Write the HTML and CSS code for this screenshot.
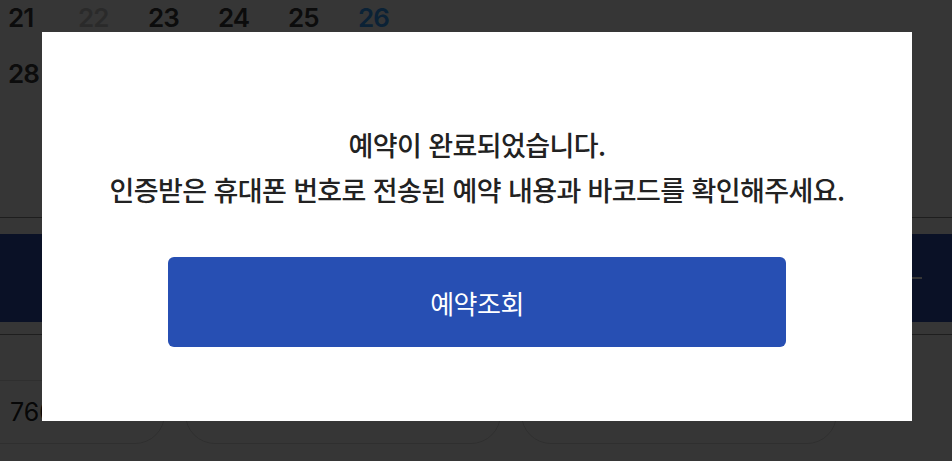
FILE: index.html
```
<!DOCTYPE html>
<html lang="ko">
<head>
  <meta charset="UTF-8">
  <meta name="viewport" content="width=device-width, initial-scale=1.0">
  <title>예약 완료</title>
  <link rel="stylesheet" href="styles.css">
</head>
<body>

  <div class="page">
    <div class="calendar">
      <div class="week">
        <span class="day">21</span>
        <span class="day off">22</span>
        <span class="day">23</span>
        <span class="day">24</span>
        <span class="day">25</span>
        <span class="day today">26</span>
        <span class="day"></span>
      </div>
      <div class="week">
        <span class="day">28</span>
      </div>
    </div>

    <div class="rule"></div>

    <div class="banner">
      <span class="banner-dash"></span>
    </div>

    <div class="rule rule-low"></div>

    <div class="slots">
      <div class="slot">7600 - 0840</div>
      <div class="slot">1 - 2 &nbsp; 0840</div>
      <div class="slot">1 - 2 &nbsp; 0840</div>
    </div>
  </div>

  <div class="overlay">
    <div class="modal">
      <p class="modal-text">
        예약이 완료되었습니다.<br>
        인증받은 휴대폰 번호로 전송된 예약 내용과 바코드를 확인해주세요.
      </p>
      <button class="modal-btn" type="button">예약조회</button>
    </div>
  </div>

</body>
</html>
```

FILE: styles.css
```
body {
  margin: 0;
  padding: 0;
  background-color: white;
  font-family: "Noto Sans CJK KR", "Noto Sans", sans-serif;
  overflow: hidden;
}

.page {
  height: 461px;
}

/* calendar */
.calendar {
  height: 217px;
  padding-left: 8px;
  box-sizing: border-box;
}

.week {
  display: flex;
  height: 56px;
}

.day {
  width: 70px;
  padding-top: 3px;
  font-family: Inter, sans-serif;
  font-size: 26px;
  font-weight: 600;
  line-height: 30px;
  letter-spacing: -1px;
  color: #3a3a3a;
}

.day.off {
  color: #c8c8c8;
}

.day.today {
  color: #34a0ff;
}

.rule {
  height: 1px;
  background-color: #909090;
}

.banner {
  margin-top: 16px;
  height: 88px;
  background-color: #3051b5;
  display: flex;
  align-items: center;
  justify-content: flex-end;
  padding-right: 30px;
}

.banner-dash {
  width: 10px;
  height: 2px;
  background-color: white;
}

.rule-low {
  margin-top: 12px;
}

/* time slots */
.slots {
  display: flex;
  gap: 20px;
  margin-top: 45px;
  margin-left: -151px;
}

.slot {
  flex: 0 0 316px;
  height: 64px;
  box-sizing: border-box;
  border: 1px solid #dcdcdc;
  border-radius: 30px;
  padding-left: 160px;
  font-family: Inter, sans-serif;
  font-size: 25px;
  line-height: 62px;
  color: #222;
}

.slot + .slot {
  padding-left: 60px;
}

/* modal */
.overlay {
  position: fixed;
  inset: 0;
  background-color: rgba(0, 0, 0, 0.79);
  display: flex;
  justify-content: center;
  align-items: flex-start;
  padding-top: 32px;
  padding-left: 2px;
}

.modal {
  width: 870px;
  height: 389px;
  box-sizing: border-box;
  background-color: white;
  padding-top: 90px;
  display: flex;
  flex-direction: column;
  align-items: center;
}

.modal-text {
  margin: 0;
  font-size: 27px;
  font-weight: 500;
  line-height: 45px;
  letter-spacing: -0.6px;
  text-align: center;
  color: #222;
}

.modal-btn {
  margin-top: 45px;
  width: 618px;
  height: 90px;
  border: none;
  border-radius: 6px;
  background-color: #274fb3;
  color: white;
  font-family: "Noto Sans CJK KR", sans-serif;
  font-size: 26px;
  letter-spacing: -0.5px;
}
```
